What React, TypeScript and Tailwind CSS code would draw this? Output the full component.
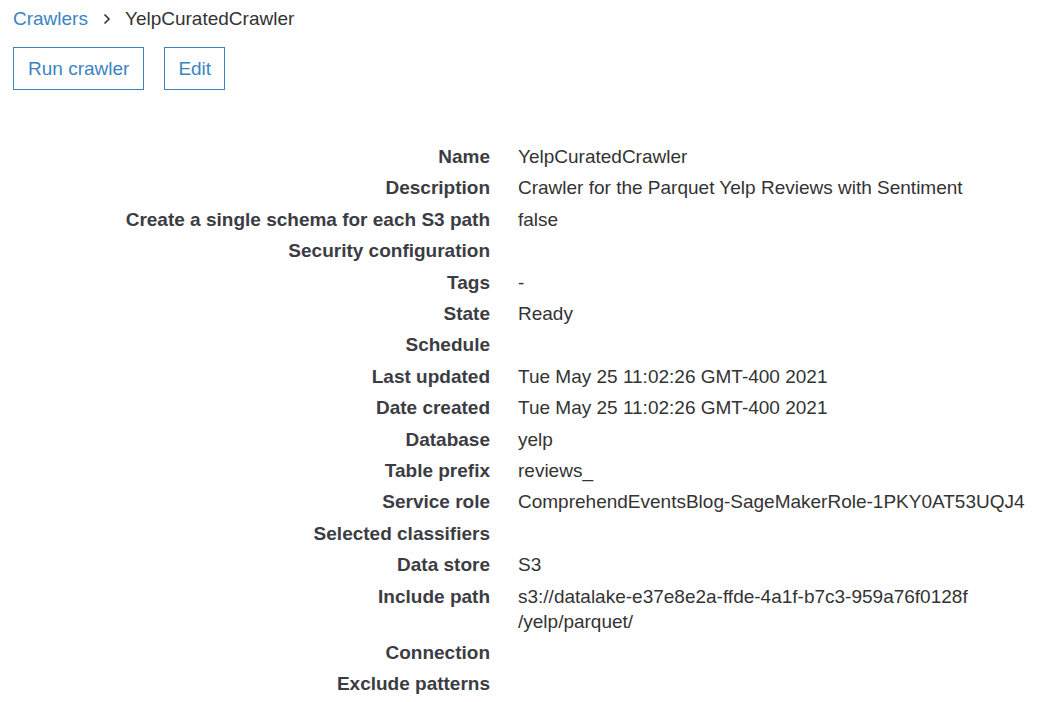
import React from "react";

const rows: [string, string[]][] = [
  ["Name", ["YelpCuratedCrawler"]],
  ["Description", ["Crawler for the Parquet Yelp Reviews with Sentiment"]],
  ["Create a single schema for each S3 path", ["false"]],
  ["Security configuration", []],
  ["Tags", ["-"]],
  ["State", ["Ready"]],
  ["Schedule", []],
  ["Last updated", ["Tue May 25 11:02:26 GMT-400 2021"]],
  ["Date created", ["Tue May 25 11:02:26 GMT-400 2021"]],
  ["Database", ["yelp"]],
  ["Table prefix", ["reviews_"]],
  ["Service role", ["ComprehendEventsBlog-SageMakerRole-1PKY0AT53UQJ4"]],
  ["Selected classifiers", []],
  ["Data store", ["S3"]],
  ["Include path", ["s3://datalake-e37e8e2a-ffde-4a1f-b7c3-959a76f0128f", "/yelp/parquet/"]],
  ["Connection", []],
  ["Exclude patterns", []],
];

export default function App() {
  return (
    <div
      className="w-[1045px] h-[702px] bg-white text-[19px] text-[#333333] overflow-hidden"
      style={{ fontFamily: '"Liberation Sans", Arial, sans-serif' }}
    >
      <div className="pl-[13px] pt-[6px]">
        <div className="flex items-center leading-[25px]">
          <span className="text-[#3a84c4]">Crawlers</span>
          <svg width="8" height="12" viewBox="0 0 8 12" className="ml-[15px] mr-[14px]">
            <polyline points="1.5,1.5 6,6 1.5,10.5" fill="none" stroke="#333" strokeWidth="1.6" />
          </svg>
          <span>YelpCuratedCrawler</span>
        </div>
        <div className="flex gap-[20px] mt-[16px]">
          <button className="border border-[#3a84c4] text-[#3a84c4] leading-[25px] px-[14px] py-[8px] h-[43px]">
            Run crawler
          </button>
          <button className="border border-[#3a84c4] text-[#3a84c4] leading-[25px] px-[13px] py-[8px] h-[43px]">
            Edit
          </button>
        </div>
      </div>
      <div className="grid grid-cols-[490px_1fr] gap-x-[28px] mt-[51px]">
        {rows.map(([label, vals]) => (
          <React.Fragment key={label}>
            <div className="text-right font-bold text-[#3c3c44] leading-[25.4px] py-[3px]">{label}</div>
            <div className="leading-[25px] py-[3px]">
              {vals.map((v) => (
                <div key={v}>{v}</div>
              ))}
            </div>
          </React.Fragment>
        ))}
      </div>
    </div>
  );
}
